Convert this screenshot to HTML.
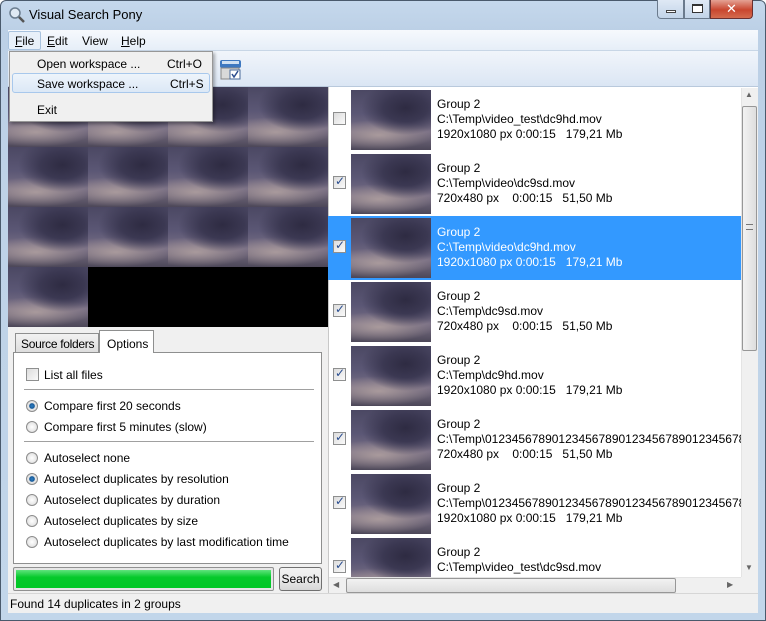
<!DOCTYPE html>
<html><head><meta charset="utf-8"><style>
*{box-sizing:border-box;margin:0;padding:0}
body{width:766px;height:621px;overflow:hidden;font-family:"Liberation Sans","DejaVu Sans",sans-serif;font-size:12px;color:#000;background:#fff;position:relative}
.a{position:absolute}
.frame{left:0;top:0;width:766px;height:621px;background:linear-gradient(180deg,#c5d8ec 0,#bcd0e6 30px,#c2d6ea 100%);border:1px solid #4a5a6c;border-radius:6px 6px 0 0}
.cloud{background:
radial-gradient(ellipse 55% 45% at 68% 30%,#2e2b42 0,#3b3852 50%,rgba(60,56,80,0) 100%),
radial-gradient(ellipse 70% 25% at 35% 75%,#a99a9c 0,rgba(150,140,150,0) 100%),
linear-gradient(180deg,#4b4863 0,#5b5775 40%,#7a7085 70%,#4c4758 100%)}
.cell{width:80px;height:60px}
.row{left:328px;width:413px;height:64px}
.cb{width:13px;height:13px;border:1px solid #8e8f8f;background:linear-gradient(135deg,#dcdcdc,#fafafa)}
.cb.on::after{content:"✓";position:absolute;left:1px;top:-3px;font-size:12px;color:#2a4d8f;font-weight:bold}
.txt{left:109px;top:9px;line-height:15px;white-space:nowrap}
.rad{width:12px;height:12px;border-radius:50%;border:1px solid #8d8d8d;background:radial-gradient(#fff,#d8d8d8)}
.rad.on{background:radial-gradient(circle,#2b7fc4 0,#1a5a98 35%,#e6e6e6 45%,#dcdcdc)}
.opt{left:44px;white-space:nowrap}
</style></head><body>
<div class="a frame"></div>
<svg class="a" style="left:8px;top:6px" width="18" height="18"><circle cx="7" cy="7" r="5" fill="#dfe9f3" stroke="#6b7d8f" stroke-width="1.5"/><line x1="11" y1="11" x2="16" y2="16" stroke="#555" stroke-width="2.5"/></svg>
<div class="a" style="left:29px;top:7px;font-size:13px">Visual Search Pony</div>
<div class="a" style="left:657px;top:0;width:27px;height:19px;border:1px solid #6b7b8d;border-top:0;border-radius:0 0 0 4px;background:linear-gradient(#dfe9f5,#c2d4e8)"><div class="a" style="left:8px;top:10px;width:10px;height:3px;background:#fff;border:1px solid #444"></div></div>
<div class="a" style="left:684px;top:0;width:26px;height:19px;border:1px solid #6b7b8d;border-top:0;background:linear-gradient(#dfe9f5,#c2d4e8)"><div class="a" style="left:7px;top:4px;width:11px;height:9px;border:1px solid #333;border-top-width:2px;background:#fff"></div></div>
<div class="a" style="left:710px;top:0;width:43px;height:19px;border:1px solid #6b3030;border-top:0;border-radius:0 0 4px 0;background:linear-gradient(#e4a294,#c9462f 55%,#d46b4e);color:#fff;font-weight:bold;text-align:center;font-size:13px;line-height:17px">✕</div>
<div class="a" style="left:8px;top:30px;width:750px;height:20px;background:linear-gradient(#f6f9fd,#e6eef8)"></div>
<div class="a" style="left:8px;top:31px;width:33px;height:19px;border:1px solid #a8c2de;background:#e8f0f9;border-radius:2px"></div>
<div class="a" style="left:15px;top:34px"><u>F</u>ile</div>
<div class="a" style="left:47px;top:34px"><u>E</u>dit</div>
<div class="a" style="left:82px;top:34px">View</div>
<div class="a" style="left:121px;top:34px"><u>H</u>elp</div>
<div class="a" style="left:8px;top:50px;width:750px;height:37px;background:linear-gradient(#f1f5fb,#dbe6f4);border-top:1px solid #c8d6e6;border-bottom:1px solid #b9c9dc"></div>
<svg class="a" style="left:218px;top:58px" width="26" height="24"><rect x="2" y="2" width="21" height="8" rx="2" fill="#3e78c0"/><rect x="4" y="3" width="17" height="3" fill="#cfe0f2"/><rect x="3" y="10" width="18" height="11" fill="#d9d9d9" stroke="#888"/><rect x="12" y="12" width="10" height="9" fill="#fff" stroke="#4a6a9a"/><path d="M14 16l2 3 4-6" stroke="#2a4d8f" fill="none" stroke-width="1.5"/></svg>
<div class="a" style="left:8px;top:87px;width:320px;height:240px;background:#000"></div>
<div class="a" style="left:8px;top:87px;width:320px;height:180px;display:grid;grid-template-columns:repeat(4,80px)">
<div class="cell cloud"></div><div class="cell cloud"></div><div class="cell cloud"></div><div class="cell cloud"></div>
<div class="cell cloud"></div><div class="cell cloud"></div><div class="cell cloud"></div><div class="cell cloud"></div>
<div class="cell cloud"></div><div class="cell cloud"></div><div class="cell cloud"></div><div class="cell cloud"></div>
</div>
<div class="a cell cloud" style="left:8px;top:267px"></div>
<div class="a" style="left:8px;top:327px;width:320px;height:266px;background:#f0f0f0"></div>
<div class="a" style="left:15px;top:333px;width:84px;height:20px;border:1px solid #8e8f8f;border-bottom:0;background:linear-gradient(#f2f2f2,#dcdcdc);padding:3px 0 0 5px;white-space:nowrap;overflow:hidden;letter-spacing:-0.3px">Source folders</div>
<div class="a" style="left:99px;top:330px;width:55px;height:23px;border:1px solid #8e8f8f;border-bottom:0;background:#fff;padding:6px 0 0 7px;z-index:2">Options</div>
<div class="a" style="left:13px;top:352px;width:309px;height:212px;border:1px solid #8e8f8f;background:#fff"></div>
<div class="a cb" style="left:26px;top:368px"></div><div class="a opt" style="top:368px">List all files</div>
<div class="a" style="left:24px;top:389px;width:290px;height:1px;background:#a0a0a0"></div>
<div class="a rad on" style="left:26px;top:400px"></div><div class="a opt" style="top:399px">Compare first 20 seconds</div>
<div class="a rad" style="left:26px;top:421px"></div><div class="a opt" style="top:420px">Compare first 5 minutes (slow)</div>
<div class="a" style="left:24px;top:441px;width:290px;height:1px;background:#a0a0a0"></div>
<div class="a rad" style="left:26px;top:452px"></div><div class="a opt" style="top:451px">Autoselect none</div>
<div class="a rad on" style="left:26px;top:473px"></div><div class="a opt" style="top:472px">Autoselect duplicates by resolution</div>
<div class="a rad" style="left:26px;top:494px"></div><div class="a opt" style="top:493px">Autoselect duplicates by duration</div>
<div class="a rad" style="left:26px;top:515px"></div><div class="a opt" style="top:514px">Autoselect duplicates by size</div>
<div class="a rad" style="left:26px;top:536px"></div><div class="a opt" style="top:535px">Autoselect duplicates by last modification time</div>
<div class="a" style="left:13px;top:567px;width:261px;height:24px;border:1px solid #909090;border-radius:2px;background:#e6e6e6;padding:2px"><div style="width:100%;height:100%;background:linear-gradient(#5fe47c,#06c92b 40%,#00c825)"></div></div>
<div class="a" style="left:279px;top:567px;width:43px;height:24px;border:1px solid #707070;border-radius:3px;background:linear-gradient(#f2f2f2,#ebebeb 50%,#d6d6d6);text-align:center;line-height:22px">Search</div>
<div class="a" style="left:328px;top:87px;width:430px;height:506px;background:#fff;border-left:1px solid #c8c8c8"></div>
<div class="a" style="left:328px;top:88px;width:413px;height:489px;overflow:hidden">
<div class="a row" style="left:0;top:0"><div class="a cb" style="left:5px;top:24px"></div><div class="a cloud" style="left:23px;top:2px;width:80px;height:60px"></div><div class="a txt">Group 2<br>C:\Temp\video_test\dc9hd.mov<br>1920x1080 px 0:00:15&nbsp;&nbsp;&nbsp;179,21 Mb</div></div>
<div class="a row" style="left:0;top:64px"><div class="a cb on" style="left:5px;top:24px"></div><div class="a cloud" style="left:23px;top:2px;width:80px;height:60px"></div><div class="a txt">Group 2<br>C:\Temp\video\dc9sd.mov<br>720x480 px&nbsp;&nbsp;&nbsp;&nbsp;0:00:15&nbsp;&nbsp;&nbsp;51,50 Mb</div></div>
<div class="a row" style="left:0;top:128px;background:#3399ff;color:#fff"><div class="a cb on" style="left:5px;top:24px"></div><div class="a cloud" style="left:23px;top:2px;width:80px;height:60px"></div><div class="a txt">Group 2<br>C:\Temp\video\dc9hd.mov<br>1920x1080 px 0:00:15&nbsp;&nbsp;&nbsp;179,21 Mb</div></div>
<div class="a row" style="left:0;top:192px"><div class="a cb on" style="left:5px;top:24px"></div><div class="a cloud" style="left:23px;top:2px;width:80px;height:60px"></div><div class="a txt">Group 2<br>C:\Temp\dc9sd.mov<br>720x480 px&nbsp;&nbsp;&nbsp;&nbsp;0:00:15&nbsp;&nbsp;&nbsp;51,50 Mb</div></div>
<div class="a row" style="left:0;top:256px"><div class="a cb on" style="left:5px;top:24px"></div><div class="a cloud" style="left:23px;top:2px;width:80px;height:60px"></div><div class="a txt">Group 2<br>C:\Temp\dc9hd.mov<br>1920x1080 px 0:00:15&nbsp;&nbsp;&nbsp;179,21 Mb</div></div>
<div class="a row" style="left:0;top:320px"><div class="a cb on" style="left:5px;top:24px"></div><div class="a cloud" style="left:23px;top:2px;width:80px;height:60px"></div><div class="a txt">Group 2<br>C:\Temp\0123456789012345678901234567890123456789\dc9sd.mov<br>720x480 px&nbsp;&nbsp;&nbsp;&nbsp;0:00:15&nbsp;&nbsp;&nbsp;51,50 Mb</div></div>
<div class="a row" style="left:0;top:384px"><div class="a cb on" style="left:5px;top:24px"></div><div class="a cloud" style="left:23px;top:2px;width:80px;height:60px"></div><div class="a txt">Group 2<br>C:\Temp\0123456789012345678901234567890123456789\dc9hd.mov<br>1920x1080 px 0:00:15&nbsp;&nbsp;&nbsp;179,21 Mb</div></div>
<div class="a row" style="left:0;top:448px"><div class="a cb on" style="left:5px;top:24px"></div><div class="a cloud" style="left:23px;top:2px;width:80px;height:60px"></div><div class="a txt">Group 2<br>C:\Temp\video_test\dc9sd.mov<br>720x480 px&nbsp;&nbsp;&nbsp;&nbsp;0:00:15&nbsp;&nbsp;&nbsp;51,50 Mb</div></div>
</div>
<div class="a" style="left:741px;top:88px;width:17px;height:489px;background:#f0f0f0;border-left:1px solid #e4e4e4"></div>
<div class="a" style="left:745px;top:90px;font-size:8px;color:#666">▲</div>
<div class="a" style="left:742px;top:106px;width:15px;height:245px;border:1px solid #979797;border-radius:2px;background:linear-gradient(90deg,#f2f2f2,#dedede)"></div>
<div class="a" style="left:746px;top:224px;width:7px;height:6px;border-top:1px solid #777;border-bottom:1px solid #777"></div>
<div class="a" style="left:745px;top:563px;font-size:8px;color:#666">▼</div>
<div class="a" style="left:329px;top:577px;width:412px;height:16px;background:#f0f0f0;border-top:1px solid #e4e4e4"></div>
<div class="a" style="left:333px;top:580px;font-size:8px;color:#666">◀</div>
<div class="a" style="left:346px;top:578px;width:330px;height:15px;border:1px solid #979797;border-radius:2px;background:linear-gradient(#f2f2f2,#dedede)"></div>
<div class="a" style="left:727px;top:580px;font-size:8px;color:#666">▶</div>
<div class="a" style="left:741px;top:577px;width:17px;height:16px;background:#f0f0f0"></div>
<div class="a" style="left:8px;top:593px;width:750px;height:20px;background:#f0f0f0;border-top:1px solid #d6d6d6;padding:3px 0 0 2px">Found 14 duplicates in 2 groups</div>
<div class="a" style="left:9px;top:51px;width:204px;height:71px;background:#f0f0f0;border:1px solid #979797;box-shadow:2px 2px 3px rgba(0,0,0,.3)"></div>
<div class="a" style="left:12px;top:73px;width:198px;height:20px;border:1px solid #a8c8ec;border-radius:3px;background:linear-gradient(#eef4fb,#dce8f6)"></div>
<div class="a" style="left:37px;top:57px">Open workspace ...</div><div class="a" style="left:167px;top:57px">Ctrl+O</div>
<div class="a" style="left:37px;top:77px">Save workspace ...</div><div class="a" style="left:170px;top:77px">Ctrl+S</div>
<div class="a" style="left:37px;top:103px">Exit</div>
</body></html>
